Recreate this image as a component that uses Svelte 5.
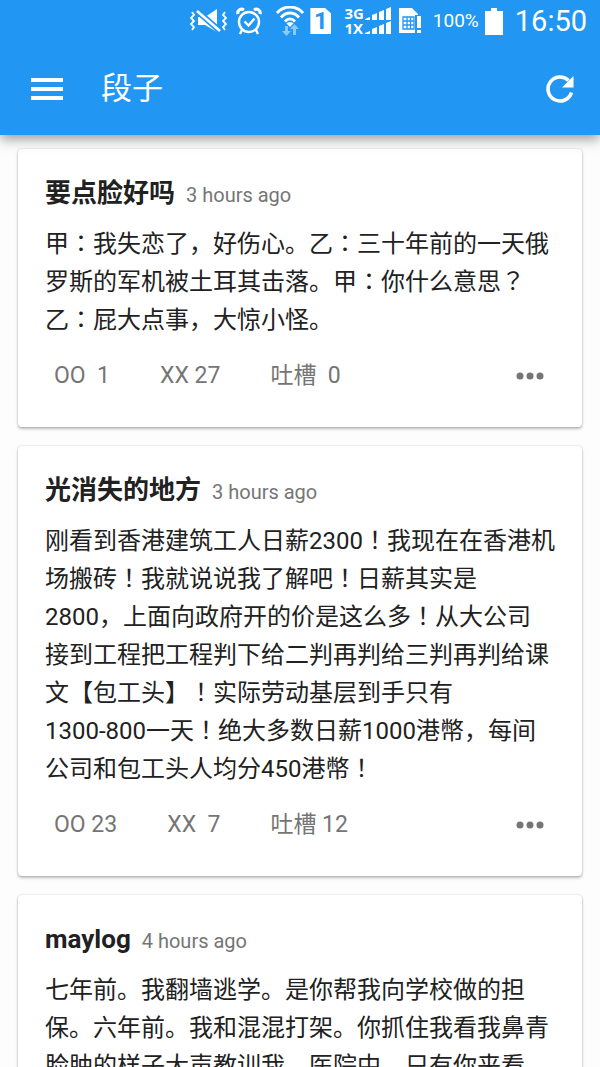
<script lang="ts">
	interface Joke {
		author: string;
		time: string;
		text: string;
		oo: number;
		xx: number;
		comments: number;
	}

	const jokes: Joke[] = [
		{
			author: '要点脸好吗',
			time: '3 hours ago',
			text: '甲：我失恋了，好伤心。乙：三十年前的一天俄\n罗斯的军机被土耳其击落。甲：你什么意思？\n乙：屁大点事，大惊小怪。',
			oo: 1,
			xx: 27,
			comments: 0
		},
		{
			author: '光消失的地方',
			time: '3 hours ago',
			text: '刚看到香港建筑工人日薪2300！我现在在香港机\n场搬砖！我就说说我了解吧！日薪其实是\n2800，上面向政府开的价是这么多！从大公司\n接到工程把工程判下给二判再判给三判再判给课\n文【包工头】！实际劳动基层到手只有\n1300-800一天！绝大多数日薪1000港幣，每间\n公司和包工头人均分450港幣！',
			oo: 23,
			xx: 7,
			comments: 12
		},
		{
			author: 'maylog',
			time: '4 hours ago',
			text: '七年前。我翻墙逃学。是你帮我向学校做的担\n保。六年前。我和混混打架。你抓住我看我鼻青\n脸肿的样子大声教训我。医院中。只有你来看',
			oo: 18,
			xx: 5,
			comments: 3
		}
	];

	// full-width marks sit in the middle of their cell, so they get their own font
	function splitMarks(text: string): string[] {
		return text.split(/([：！？]+)/).filter((part) => part !== '');
	}

	function isMark(part: string): boolean {
		return /^[：！？]/.test(part);
	}

	function pad(count: number): string {
		return String(count).padStart(2);
	}
</script>

<div class="screen">
	<header>
		<div class="status">
			<svg class="mute" width="40" height="28" viewBox="0 0 40 28" aria-hidden="true">
				<path d="M9 10h7L28 2v23L16 18H9z" fill="#fff" />
				<path d="M6 2l26 23" stroke="#2196f3" stroke-width="6" />
				<path d="M8 4l23 20" stroke="#fff" stroke-width="2.6" />
				<path d="M3 5l2 3-3 3 3 3-3 3 3 3-2 3M36 5l-2 3 3 3-3 3 3 3-3 3 2 3" fill="none" stroke="#fff" stroke-width="1.8" />
			</svg>
			<svg class="alarm" width="26" height="28" viewBox="0 0 26 28" fill="none" stroke="#fff" aria-hidden="true">
				<circle cx="13" cy="15" r="10" stroke-width="2.4" />
				<path d="M8.500 14.500l4 4 6-7" stroke-width="2.4" />
				<path d="M2 7C1 3 5 1 8 3M24 7c1-4-3-6-6-4" stroke-width="3.200" />
				<path d="M6 23l-2 4M20 23l2 4" stroke-width="2.4" />
			</svg>
			<svg class="wifi" width="28" height="30" viewBox="0 0 28 30" fill="none" stroke="#fff" aria-hidden="true">
				<path d="M1 7C8-1 20-1 27 7M5 11.500c5-6 13-6 18 0M9 15.500c3-3.500 7-3.500 10 0" stroke-width="2.800" />
				<path d="M10.500 17.500c1.500-1.600 5.500-1.600 7 0L14 21z" fill="#fff" stroke="none" />
				<path d="M9 20h3v5h3l-4.500 5L6 25h3zM17 29v-6h-3l4.500-5 4.500 5h-3v6z" fill="#8cc9f9" stroke="none" />
			</svg>
			<span class="sim-one">1</span>
			<div class="networks">
				<span>3G</span>
				<span>1X</span>
			</div>
			<svg class="bars" width="26" height="28" viewBox="0 0 26 28" fill="#fff" aria-hidden="true">
				<path d="M0 13v-1l5-2v3zM7 13V8l5-2v7zM14 13V5l5-2v10zM21 13V2l5-2v13z" />
				<path d="M0 27v-1l5-2v3zM7 27v-5l5-2v7zM14 27v-8l5-2v10zM21 27V16l5-2v13z" />
			</svg>
			<svg class="sim-alert" width="24" height="28" viewBox="0 0 24 28" aria-hidden="true">
				<path d="M1 1h13l6 6v5h-3v14H1z" fill="#fff" />
				<path d="M5 10h11v12H5zM5 14h11M5 18h11M9 10v12M12.500 10v12" fill="none" stroke="#2196f3" stroke-width="1.300" />
				<path d="M17 8h6v20h-6z" fill="#2196f3" />
				<path d="M19 9h4v12h-4zM19 23h4v3h-4z" fill="#fff" />
			</svg>
			<span class="percent">100%</span>
			<svg class="battery" width="18" height="27" viewBox="0 0 18 27" fill="#fff" aria-hidden="true">
				<path d="M6 0h6v3h6v24H0V3h6z" />
			</svg>
			<span class="clock">16:50</span>
		</div>
		<div class="toolbar">
			<button class="icon" type="button" aria-label="Menu">
				<svg width="32" height="24" viewBox="0 0 32 24" fill="#fff"><path d="M0 1h32v4H0zM0 10h32v4H0zM0 19h32v4H0z" /></svg>
			</button>
			<h1>段子</h1>
			<button class="icon" type="button" aria-label="Refresh">
				<svg width="28" height="28" viewBox="0 0 28 28">
					<path d="M22.500 5.500A12 12 0 1 0 25.500 17.500" fill="none" stroke="#fff" stroke-width="3.600" />
					<path d="M27.500 1v11.500H16z" fill="#fff" />
				</svg>
			</button>
		</div>
	</header>

	<main>
		{#each jokes as joke (joke.author)}
			<article>
				<div class="info">
					<h2>{joke.author}</h2>
					<span class="time">{joke.time}</span>
				</div>
				<p>
					{#each joke.text.split('\n') as line}
						<span class="line">{#each splitMarks(line) as part}{#if isMark(part)}<span class="mark">{part}</span>{:else}{part}{/if}{/each}</span>
					{/each}
				</p>
				<div class="actions">
					<button type="button">OO {pad(joke.oo)}</button>
					<button type="button">XX {pad(joke.xx)}</button>
					<button type="button">吐槽 {pad(joke.comments)}</button>
					<button class="more" type="button" aria-label="More">
						<svg width="28" height="8" viewBox="0 0 28 8" fill="#757575"><circle cx="4" cy="4" r="3.500" /><circle cx="14" cy="4" r="3.500" /><circle cx="24" cy="4" r="3.500" /></svg>
					</button>
				</div>
			</article>
		{/each}
	</main>
</div>

<style>
	:global(body) {
		background: #fdfdfd;
	}

	.screen {
		display: flex;
		flex-direction: column;
		height: 100vh;
		font-family: Roboto, 'Noto Sans CJK SC', sans-serif;
		color: #212121;
	}

	header {
		position: relative;
		flex-shrink: 0;
		background: #2196f3;
		color: #fff;
		box-shadow: 0 4px 12px rgba(0, 0, 0, 0.4);
	}

	svg {
		display: block;
		flex-shrink: 0;
	}

	.status {
		display: flex;
		align-items: center;
		justify-content: flex-end;
		height: 42px;
		padding-right: 13px;
	}

	.alarm {
		margin-left: 7px;
	}

	.wifi {
		margin-left: 14px;
	}

	.sim-one {
		width: 21px;
		height: 26px;
		margin-left: 6px;
		background: #fff;
		color: #2196f3;
		clip-path: polygon(0 0, 70% 0, 100% 22%, 100% 100%, 0 100%);
		font-size: 24px;
		font-weight: 700;
		line-height: 26px;
		text-align: center;
	}

	.networks {
		display: flex;
		flex-direction: column;
		margin-left: 13px;
		font-family: 'Open Sans', sans-serif;
		font-size: 15px;
		font-weight: 700;
		line-height: 15px;
	}

	.bars {
		margin-left: 1px;
	}

	.sim-alert {
		margin-left: 7px;
	}

	.percent {
		margin-left: 11px;
		font-size: 19px;
		line-height: 42px;
	}

	.battery {
		margin-left: 6px;
	}

	.clock {
		margin-left: 12px;
		font-size: 29px;
		line-height: 42px;
	}

	.toolbar {
		display: flex;
		align-items: center;
		height: 93px;
		padding: 0 26px 0 31px;
	}

	h1 {
		flex: 1;
		margin: 0 0 0 38px;
		font-size: 31px;
		font-weight: 400;
		line-height: 40px;
	}

	button {
		padding: 0;
		border: none;
		background: none;
		color: inherit;
		font: inherit;
		cursor: pointer;
	}

	main {
		flex: 1;
		display: flex;
		flex-direction: column;
		gap: 19px;
		min-height: 0;
		padding: 14px 18px;
		overflow-y: auto;
		scrollbar-width: none;
	}

	article {
		flex-shrink: 0;
		padding: 26px 27px 32px;
		border-radius: 4px;
		background: #fff;
		box-shadow:
			0 0 2px rgba(0, 0, 0, 0.2),
			0 2px 3px rgba(0, 0, 0, 0.25);
	}

	.info {
		display: flex;
		align-items: baseline;
		gap: 11px;
		height: 36px;
		line-height: 36px;
	}

	h2 {
		margin: 0;
		font-size: 26px;
		font-weight: 700;
	}

	.time {
		color: #757575;
		font-size: 20px;
	}

	p {
		margin: 14px 0 18px;
		font-size: 24px;
		line-height: 38px;
	}

	.line {
		display: block;
		white-space: nowrap;
	}

	.mark {
		font-family: Roboto, 'Noto Sans CJK TC', sans-serif;
	}

	.actions {
		display: flex;
		align-items: center;
		gap: 50px;
		padding-left: 9px;
		color: #757575;
		font-size: 23px;
		line-height: 38px;
	}

	.actions button {
		white-space: pre;
	}

	.actions .more {
		margin: 0 11px 0 auto;
	}
</style>
